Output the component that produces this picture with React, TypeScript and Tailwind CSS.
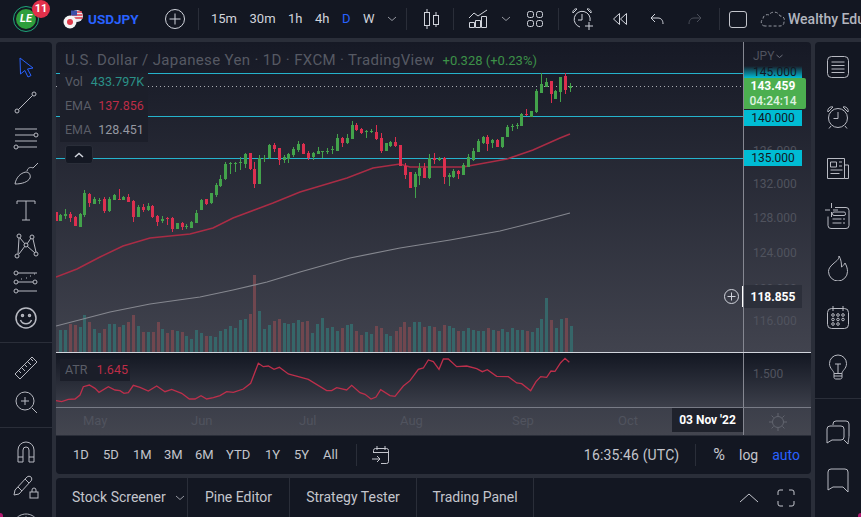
import React from "react";

type Row = number[];

// candles read off the chart: [x, high, bodyTop, bodyBottom, low, up]
const fromZoom = (ox: number, oy: number, rows: Row[]) =>
  rows.map(([vx, h, t, b, l, up]) => ({
    x: Math.round(ox + vx / 3),
    h: oy + h / 3,
    t: oy + t / 3,
    b: oy + b / 3,
    l: oy + l / 3,
    up: up === 1,
  }));

const candles = [
  ...fromZoom(50, 110, [
    [19, 305, 305, 332, 332, 0], [31, 312, 315, 333, 334, 1], [46, 298, 312, 318, 328, 1], [61, 306, 312, 325, 335, 0],
    [76, 318, 320, 348, 349, 0], [91, 308, 311, 350, 352, 1], [103, 240, 250, 315, 320, 1], [118, 250, 251, 280, 290, 0],
    [133, 262, 268, 281, 282, 1], [148, 264, 269, 272, 283, 1], [163, 262, 266, 302, 308, 0], [178, 262, 266, 302, 306, 1],
    [193, 252, 256, 270, 270, 1], [206, 236, 266, 270, 270, 0], [220, 258, 260, 270, 271, 1], [235, 252, 262, 275, 276, 0],
    [250, 270, 272, 320, 335, 0], [265, 284, 290, 320, 322, 1], [280, 283, 291, 300, 305, 0], [295, 280, 287, 300, 303, 1],
    [307, 284, 287, 322, 325, 0], [322, 316, 318, 335, 348, 0], [337, 317, 327, 334, 338, 1], [352, 322, 325, 327, 345, 0],
    [367, 322, 325, 358, 365, 0], [382, 338, 340, 356, 357, 1], [397, 337, 340, 350, 360, 0], [409, 342, 348, 350, 358, 1],
    [424, 332, 335, 353, 354, 1], [439, 300, 308, 338, 340, 1],
  ]),
  ...fromZoom(200, 110, [
    [4, 268, 270, 300, 300, 1], [19, 267, 268, 282, 285, 0], [34, 250, 250, 280, 282, 1], [49, 220, 224, 255, 262, 1],
    [61, 195, 207, 228, 230, 1], [76, 157, 163, 208, 210, 1], [91, 156, 158, 161, 192, 1], [106, 157, 159, 161, 185, 1],
    [121, 142, 157, 160, 180, 1], [136, 130, 132, 162, 175, 1], [151, 130, 130, 178, 180, 0], [163, 155, 177, 222, 235, 0],
    [178, 135, 145, 222, 222, 1], [193, 135, 145, 148, 155, 1], [208, 102, 104, 145, 146, 1], [223, 100, 104, 117, 125, 0],
    [238, 114, 114, 150, 165, 0], [253, 135, 140, 150, 160, 1], [265, 130, 132, 148, 158, 1], [280, 110, 116, 135, 140, 1],
    [295, 93, 103, 120, 126, 1], [310, 100, 102, 132, 133, 0], [325, 122, 128, 143, 150, 0], [340, 125, 128, 142, 150, 1],
    [355, 112, 123, 132, 133, 1], [367, 122, 122, 124, 145, 1], [382, 115, 122, 126, 132, 1], [397, 107, 117, 121, 133, 1],
    [412, 73, 83, 123, 124, 1], [427, 82, 83, 100, 110, 0], [442, 72, 83, 100, 103, 1], [457, 33, 44, 87, 88, 1],
    [469, 40, 44, 60, 62, 0], [484, 55, 57, 70, 72, 0], [499, 60, 62, 64, 85, 1], [514, 57, 62, 65, 70, 1],
    [529, 45, 65, 88, 90, 0], [544, 70, 83, 122, 130, 0], [559, 98, 100, 122, 124, 1], [571, 92, 95, 107, 110, 1],
    [586, 82, 95, 108, 110, 0],
  ]),
  ...fromZoom(390, 60, [
    [31, 255, 255, 318, 318, 0], [46, 310, 318, 345, 358, 0], [61, 337, 337, 384, 384, 0], [76, 335, 343, 382, 413, 1],
    [88, 308, 323, 347, 375, 1], [103, 310, 323, 353, 355, 0], [118, 283, 295, 355, 357, 1], [133, 280, 293, 300, 312, 0],
    [148, 290, 293, 300, 303, 1], [163, 290, 295, 350, 372, 0], [178, 338, 345, 350, 378, 1], [190, 327, 332, 350, 353, 1],
    [205, 330, 333, 343, 358, 0], [220, 308, 315, 345, 346, 1], [235, 283, 292, 320, 322, 1], [250, 265, 273, 300, 303, 1],
    [265, 238, 243, 275, 277, 1], [280, 228, 232, 250, 252, 1], [292, 225, 232, 252, 272, 0], [307, 236, 240, 250, 264, 1],
    [322, 238, 240, 260, 262, 0], [337, 230, 232, 260, 264, 1], [352, 194, 200, 230, 232, 1], [367, 192, 197, 202, 212, 1],
    [382, 190, 196, 199, 208, 1], [394, 160, 162, 198, 198, 1], [409, 148, 162, 165, 168, 0], [424, 152, 152, 170, 172, 1],
    [439, 88, 94, 157, 158, 1], [454, 40, 72, 98, 98, 1], [469, 55, 65, 80, 82, 1], [484, 62, 62, 102, 128, 0],
    [496, 90, 92, 118, 118, 1], [511, 50, 50, 96, 125, 1], [526, 40, 48, 90, 102, 0], [541, 70, 78, 85, 95, 1],
  ]),
];

// volume bars: [x, height, red]
const volumes: Row[] = [
  [60, 22, 0], [65, 22, 0], [70, 28, 1], [75, 27, 1], [80, 25, 0], [84, 37, 0], [89, 30, 1], [94, 23, 0], [99, 19, 0],
  [104, 23, 1], [109, 28, 0], [114, 28, 0], [119, 25, 1], [123, 27, 0], [128, 30, 1], [133, 37, 1], [138, 26, 0],
  [143, 20, 1], [148, 20, 0], [153, 20, 1], [158, 30, 1], [162, 23, 0], [167, 19, 1], [172, 22, 1], [177, 21, 0],
  [182, 20, 1], [186, 16, 0], [191, 13, 0], [196, 22, 0], [201, 19, 0], [206, 16, 1], [210, 16, 0], [215, 15, 0],
  [220, 21, 0], [225, 23, 0], [230, 26, 0], [235, 24, 0], [240, 32, 0], [245, 33, 0], [250, 38, 1], [254, 77, 1],
  [259, 41, 0], [264, 23, 0], [269, 27, 0], [274, 31, 1], [279, 33, 1], [284, 29, 0], [288, 28, 0], [293, 29, 0],
  [298, 32, 0], [302, 30, 1], [307, 31, 1], [312, 19, 0], [317, 28, 0], [322, 34, 0], [327, 24, 0], [332, 25, 0],
  [337, 21, 0], [342, 24, 1], [347, 27, 0], [351, 28, 0], [356, 21, 1], [361, 17, 1], [366, 20, 0], [371, 18, 0],
  [376, 26, 1], [381, 24, 1], [386, 18, 0], [390, 16, 0], [396, 21, 1], [400, 25, 1], [404, 30, 1], [409, 25, 1],
  [414, 30, 0], [419, 30, 0], [424, 25, 1], [429, 26, 0], [434, 25, 1], [439, 21, 0], [444, 27, 1], [449, 26, 0],
  [453, 24, 0], [458, 21, 1], [463, 21, 0], [468, 24, 0], [473, 22, 0], [478, 21, 0], [483, 21, 0], [488, 24, 1],
  [493, 22, 0], [498, 21, 1], [502, 23, 0], [507, 20, 0], [512, 24, 0], [517, 22, 0], [522, 22, 0], [527, 21, 1],
  [532, 20, 0], [537, 24, 0], [541, 33, 0], [546, 54, 0], [551, 32, 1], [556, 24, 0], [561, 33, 0], [566, 34, 1],
  [571, 26, 0],
];

const ema50 =
  "56,277 77,269 100,257 123,246 150,238 190,234 213,228 233,218 257,209 273,203 300,192 347,178 373,168 400,164 410,167 463,167 507,159 533,150 560,138 570,134";
const ema200 =
  "56,326 110,312 150,304 200,297 233,290 267,282 300,272 350,258 400,248 450,240 500,231 540,221 570,213";

const zoomPts = (ox: number, oy: number, pts: Row[]) => pts.map(([x, y]) => `${ox + x / 3},${oy + y / 3}`).join(" ");
const atr = [
  zoomPts(0, 350, [
    [168, 152], [185, 155], [205, 148], [225, 147], [240, 135], [250, 110], [268, 105], [285, 115], [297, 127], [325, 110],
    [345, 120], [360, 122], [372, 130], [385, 128], [400, 106], [420, 112], [445, 123], [470, 108], [495, 125], [515, 118],
    [545, 130], [568, 147], [585, 147], [603, 137], [620, 147], [640, 143], [660, 137], [680, 125], [700, 127], [730, 117],
    [752, 100], [775, 40], [790, 50], [805, 48], [822, 58], [838, 52], [865, 72],
  ]),
  zoomPts(290, 290, [
    [0, 253], [55, 268], [110, 302], [125, 302], [140, 293], [170, 300], [185, 286], [210, 308], [225, 313], [243, 327],
    [258, 321], [272, 299], [300, 317], [315, 319], [340, 288], [360, 272], [385, 238], [400, 234], [415, 210], [430, 215],
    [447, 238], [460, 207], [475, 207], [500, 230], [530, 228], [560, 236], [577, 245], [592, 239], [620, 259], [655, 260],
    [680, 279], [695, 281], [722, 302], [738, 275], [752, 260], [770, 262], [783, 243], [795, 244], [812, 218], [825, 205],
    [838, 217],
  ]),
].join(" ");

const Ico = ({ children, className = "" }: { children: React.ReactNode; className?: string }) => (
  <svg width="28" height="28" viewBox="0 0 28 28" fill="none" stroke="currentColor" strokeWidth="1" className={className}>
    {children}
  </svg>
);

const Slot = ({ children, className = "h-9" }: { children: React.ReactNode; className?: string }) => (
  <div className={`flex items-center justify-center ${className}`}>{children}</div>
);

const Divider = ({ className = "" }: { className?: string }) => <div className={`w-px h-[22px] bg-[#2a2e39] ${className}`} />;

const leftA = [
  <path key="a" d="M8 6l13 10-5.500 1 3.500 6.500-3 1.500-3.200-6.500-4.300 3.500z" />,
  <g key="b"><circle cx="5" cy="23" r="2" /><circle cx="22" cy="6" r="2" /><path d="M6.500 21.500L20.500 7.500" /></g>,
  <g key="c"><path d="M3 5h22M3 11h19M3 17h22M6 23h19" /><circle cx="24" cy="11" r="2" /><circle cx="4" cy="23" r="2" /></g>,
  <g key="d"><path d="M3 24c1-6 5-11 11-12 3 0 5 3 4 6-2 4-8 6-15 6z" /><path d="M15 11c1-4 4-4 6-3l5-5" /></g>,
  <path key="e" d="M5 8V5h18v3M14 5v19M10 24h8" />,
  <g key="f"><circle cx="5" cy="24" r="2" /><circle cx="7" cy="4" r="2" /><circle cx="14" cy="13" r="2" /><circle cx="20" cy="5" r="2" /><circle cx="24" cy="22" r="2" /><path d="M6 22L7 6M8 6l5 6M15 12l4-6M21 7l3 13M7 22l6-8M15 14l8 7" /></g>,
  <g key="g"><path d="M6 5h19M6 14h15M6 23h19" /><circle cx="4" cy="5" r="2" /><circle cx="4" cy="14" r="2" /><circle cx="4" cy="23" r="2" /><circle cx="23" cy="14" r="2" /><path d="M9 11h2M14 10h2M18 8h2M22 6h1" strokeDasharray="1 1" /></g>,
  <g key="h" strokeWidth="1.500"><circle cx="14" cy="14" r="10" /><circle cx="10.500" cy="11.500" r="1" /><circle cx="17.500" cy="11.500" r="1" /><path d="M8.500 16c2 5 9 5 11 0" /></g>,
];

const rightIcons = [
  <g key="a"><rect x="3.500" y="3.500" width="21" height="21" rx="4" /><path d="M7.500 9h13M7.500 12.500h13M7.500 16h13M7.500 19.500h13" /></g>,
  <g key="b"><circle cx="14" cy="15" r="9.500" /><path d="M14 9v6.500H9.500" /><path d="M4 9c-1-3 2-6 5-5M24 9c1-3-2-6-5-5M4 9l5-5M24 9l-5-5M7 23l-2 2.500M21 23l2 2.500" /></g>,
  <g key="c"><path d="M20.500 25.500h-17v-20h17zM20.500 12h4v13.500h-4" /><path d="M6.500 9h6v5h-6zM15 9h3M15 13h3M6.500 17h12M6.500 20.500h9" /></g>,
  <g key="d"><path d="M1 7h5M9 7h5M7.500 0v5M7.500 9v5" /><path d="M11 4.500h11a3 3 0 0 1 3 3v15a3 3 0 0 1-3 3H7a3 3 0 0 1-3-3v-9" /><rect x="8.500" y="9" width="13" height="3.500" rx="1.500" /><path d="M8.500 16h9M19 16h2M8.500 20h9M19 20h2" /></g>,
  <path key="e" d="M15 3c0 4-3 5-6 8-3 2.500-4.500 5-4.500 7.500a9.500 9.500 0 0 0 19 0c0-3-1-6-2.500-8.500-1 2-2 3-3.500 4 0-4-.5-8-2.500-11z" />,
  <g key="f"><rect x="3.500" y="5.500" width="21" height="20" rx="4" /><path d="M9 3v5M19 3v5" /><circle cx="9" cy="12" r="1.300" /><circle cx="14" cy="12" r="1.300" /><circle cx="19" cy="12" r="1.300" /><circle cx="9" cy="16.500" r="1.300" /><circle cx="14" cy="16.500" r="1.300" /><circle cx="19" cy="16.500" r="1.300" /><circle cx="9" cy="21" r="1.300" /><circle cx="14" cy="21" r="1.300" /></g>,
  <g key="g"><path d="M10 20.500c0-3-4.500-4.500-4.500-10a8.500 8.500 0 0 1 17 0c0 5.500-4.500 7-4.500 10z" /><path d="M10 20.500v4c0 1 1 1.500 2 1.500h4c1 0 2-.5 2-1.500v-4M10 23h8M11 11h6M14 11v9" /></g>,
];

const Candles = () => (
  <g shapeRendering="crispEdges">
    {candles.map((c, i) => {
      const fill = c.up ? "#43a24b" : "#dc2f4f";
      return (
        <g key={i} fill={fill}>
          <rect x={c.x} y={c.h} width="1" height={c.l - c.h} />
          <rect x={c.x - 1} y={c.t} width="3" height={Math.max(c.b - c.t, 1)} />
        </g>
      );
    })}
  </g>
);

// [label, top on the page, visible height] - two of them are mostly hidden by a tag
const priceLabels: [string, number, number][] = [
  ["126.000", 143, 7],
  ["132.000", 176, 16],
  ["128.000", 210, 16],
  ["124.000", 245, 16],
  ["120.000", 281, 4],
  ["116.000", 313, 16],
];

const PriceTag = ({ y, children }: { y: number; children: string }) => (
  <div
    className="absolute left-0 w-[58px] h-[16px] bg-[#00bcd4] text-[#131722] text-[12px] leading-[16px] text-center"
    style={{ top: y }}
  >
    {children}
  </div>
);

const months: [string, number][] = [
  ["May", 83],
  ["Jun", 191],
  ["Jul", 299],
  ["Aug", 400],
  ["Sep", 512],
  ["Oct", 618],
];

const ranges: [string, string][] = [
  ["1D", "w-[30px]"],
  ["5D", "w-[30px]"],
  ["1M", "w-[31px]"],
  ["3M", "w-[31px]"],
  ["6M", "w-[31px]"],
  ["YTD", "w-[39px]"],
  ["1Y", "w-[29px]"],
  ["5Y", "w-[29px]"],
  ["All", "w-[25px]"],
];

export default function App() {
  return (
    <div className="relative w-[861px] h-[517px] overflow-hidden bg-[#2a2e39] flex flex-col gap-[4px] text-[#d1d4dc] text-[14px] font-['Roboto',sans-serif]">
      {/* top bar */}
      <header className="h-[38px] shrink-0 bg-[#131722] flex items-center [&>*]:shrink-0">
        <div className="w-[198px] flex items-center pl-[13px]">
          <div className="relative w-[26px] h-[26px] rounded-full border border-[#1fa57a] p-[2px]">
            <div className="w-full h-full rounded-full bg-[#2e9e3c] flex items-center justify-center text-white text-[11px] font-bold italic">
              LE
            </div>
            <div className="absolute -top-[7px] left-[18px] w-[18px] h-[18px] rounded-full bg-[#e2304a] flex items-center justify-center text-white text-[11px] font-bold">
              11
            </div>
          </div>
          <svg width="20" height="20" viewBox="0 0 20 20" className="ml-[24px]">
            <circle cx="14" cy="7" r="6" fill="#e8e8ee" />
            <path d="M9 3h10M8.500 6h11M8.500 9h11" stroke="#e0394a" strokeWidth="1.400" />
            <path d="M8 1.500h6v5H8z" fill="#3c4fa8" />
            <circle cx="7" cy="13" r="6.500" fill="#f4f4f4" />
            <circle cx="7" cy="13" r="3" fill="#e0394a" />
          </svg>
          <span className="ml-[5px] text-[#2962ff] font-bold text-[13.5px]">USDJPY</span>
          <svg width="20" height="20" viewBox="0 0 20 20" fill="none" stroke="#d1d4dc" className="ml-[26px]">
            <circle cx="10" cy="10" r="9.500" />
            <path d="M10 4.500v11M4.500 10h11" />
          </svg>
        </div>
        <Divider />
        <div className="w-[207px] flex items-center pl-[12px] gap-[12.5px] text-[13px]">
          <span>15m</span>
          <span>30m</span>
          <span>1h</span>
          <span>4h</span>
          <span className="text-[#2962ff]">D</span>
          <span>W</span>
          <svg width="10" height="6" viewBox="0 0 10 6" fill="none" stroke="#9598a1">
            <path d="M1 1l4 3.500L9 1" />
          </svg>
        </div>
        <Divider />
        <svg width="19" height="20" viewBox="0 0 19 20" fill="none" stroke="#d1d4dc" className="ml-[16px]">
          <path d="M4 0v3M4 17v3M13 3v3M13 16v2" />
          <rect x="1.500" y="3.500" width="5" height="13" />
          <rect x="10.500" y="6.500" width="5" height="9" />
        </svg>
        <Divider className="ml-[11px]" />
        <svg width="20" height="20" viewBox="0 0 20 20" fill="none" stroke="#d1d4dc" className="ml-[14px]">
          <path d="M1.500 18.500v-5h5v5zM7.500 18.500v-7h5v7zM13.500 18.500v-11h5v11z" />
          <path d="M1 9l5-5 4 3 9-6" />
        </svg>
        <svg width="10" height="6" viewBox="0 0 10 6" fill="none" stroke="#9598a1" className="ml-[13px]">
          <path d="M1 1l4 3.500L9 1" />
        </svg>
        <svg width="18" height="18" viewBox="0 0 18 18" fill="none" stroke="#d1d4dc" className="ml-[15px]">
          <rect x="1.500" y="1.500" width="6" height="6" rx="2" />
          <rect x="10.500" y="1.500" width="6" height="6" rx="2" />
          <rect x="1.500" y="10.500" width="6" height="6" rx="2" />
          <rect x="10.500" y="10.500" width="6" height="6" rx="2" />
        </svg>
        <Divider className="ml-[14px]" />
        <svg width="22" height="22" viewBox="0 0 22 22" fill="none" stroke="#d1d4dc" className="ml-[13px]">
          <path d="M8 19a8 8 0 1 1 10-6" />
          <path d="M10 6v6H6" />
          <path d="M1 5c-1-2 2-5 4-4M19 5c1-2-2-5-4-4M1 5l4-4M19 5l-4-4" />
          <path d="M17 14v8M13 18h8" />
        </svg>
        <svg width="16" height="14" viewBox="0 0 16 14" fill="none" stroke="#d1d4dc" className="ml-[18px]">
          <path d="M7.500 1.500L1.500 7l6 5.500zM14.500 1.500L8.500 7l6 5.500z" />
        </svg>
        <svg width="14" height="12" viewBox="0 0 14 12" fill="none" stroke="#d1d4dc" className="ml-[22px]">
          <path d="M5 1L1 5l4 4M1 5h7c3 0 5 2 5 6" />
        </svg>
        <svg width="14" height="12" viewBox="0 0 14 12" fill="none" stroke="#4a4e59" className="ml-[24px]">
          <path d="M9 1l4 4-4 4M13 5H6c-3 0-5 2-5 6" />
        </svg>
        <Divider className="ml-[17px]" />
        <div className="ml-[9px] w-[18px] h-[17px] rounded-[3px] border border-[#c3c5cc]" />
        <svg width="25" height="18" viewBox="0 0 25 18" fill="none" stroke="#9598a1" strokeDasharray="3 2" className="ml-[13px]">
          <path d="M5 16C1 16 0 11 3 9c0-4 4-5 6-4 2-4 9-4 11 1 4 0 5 3 4 6 0 3-2 4-4 4z" />
        </svg>
        <span className="ml-[3px] whitespace-nowrap text-[#b2b5be] font-medium">Wealthy Edu</span>
      </header>

      <div className="flex-1 min-h-0 flex gap-[4px]">
        {/* drawing tools */}
        <aside className="w-[52px] shrink-0 bg-[#131722] rounded-tr-[4px] text-[#b8bac2] flex flex-col">
          <div className="pt-[6px] pb-[6px] border-b border-[#2a2e39]">
            {leftA.map((p, i) => (
              <Slot key={i}>
                <Ico className={i === 0 ? "text-[#2962ff]" : ""}>{p}</Ico>
              </Slot>
            ))}
          </div>
          <div className="pt-[8px] pb-[8px] border-b border-[#2a2e39]">
            <Slot className="h-[34px]">
              <Ico>
                <path d="M3 20L20 3l5 5L8 25z" />
                <path d="M7 17l2 2M10 14l3 3M13 11l2 2M16 8l3 3M19 5l2 2" />
              </Ico>
            </Slot>
            <Slot className="h-[34px]">
              <Ico>
                <circle cx="13" cy="13" r="9" />
                <path d="M20 20l5 5M13 9v8M9 13h8" />
              </Ico>
            </Slot>
          </div>
          <div className="pt-[7px]">
            <Slot className="h-[34px]">
              <Ico>
                <path d="M6 24V12a8 8 0 0 1 16 0v12h-5V12a3 3 0 0 0-6 0v12zM6 19h5M17 19h5" />
              </Ico>
            </Slot>
            <Slot className="h-[34px]">
              <Ico>
                <path d="M3 18L15 5c1-1 3-1 4 0s1 3 0 4L7 22l-5 1zM6 15l4 4M13 7l4 4" />
                <rect x="18" y="20" width="8" height="6" />
                <path d="M20 20v-2a2 2 0 0 1 4 0v2" />
              </Ico>
            </Slot>
            <Slot className="h-[34px]">
              <Ico>
                <path d="M3 14c5-8 17-8 22 0-5 8-17 8-22 0z" />
                <circle cx="14" cy="14" r="3" />
              </Ico>
            </Slot>
          </div>
        </aside>

        <main className="w-[755px] shrink-0 flex flex-col gap-[1px] min-h-0">
          {/* chart */}
          <section className="h-[393px] shrink-0 rounded-t-[4px] overflow-hidden flex flex-col text-[#50535e] text-[12px]">
            <div className="h-[311px] shrink-0 flex bg-linear-to-b from-[#161925] to-[#41434e] border-b border-[#d1d4dc]">
              <div className="relative w-[687px] shrink-0">
                <svg width="687" height="310" viewBox="56 42 687 310" fill="none" className="absolute left-0 top-0">
                  {volumes.map(([x, h, r], i) => (
                    <rect key={i} x={x - 1} y={352 - h} width="3" height={h} fill={r ? "#70474f" : "#366669"} shapeRendering="crispEdges" />
                  ))}
                  <path d="M56 73.500h687M56 116.500h687M56 158.500h687" stroke="#25b3cc" />
                  <path d="M56 86.500h687" stroke="#a7a9b0" strokeDasharray="1 3" />
                  <polyline points={ema200} stroke="#85878f" strokeWidth="1.200" />
                  <polyline points={ema50} stroke="#a92c45" strokeWidth="1.500" />
                  <Candles />
                  <circle cx="731.500" cy="296.500" r="7" stroke="#d1d4dc" />
                  <path d="M731.500 292.500v8M727.500 296.500h8" stroke="#d1d4dc" />
                  <path d="M742.500 286v21" stroke="#ffffff" />
                </svg>

                <div className="absolute left-[9px] top-[7px] flex items-center text-[15px] whitespace-nowrap">
                  <span className="text-[#565963] tracking-[0.35px]">U.S. Dollar / Japanese Yen · 1D · FXCM · TradingView</span>
                  <span className="ml-[8px] text-[13px] text-[#3d9148]">+0.328 (+0.23%)</span>
                </div>

                <div className="absolute left-[4px] top-[31px] w-[88px] h-[69px] bg-[#1c1f2a] text-[#5a5d67] text-[12.5px] flex flex-col px-[5px] gap-[5px]">
                  <div className="flex gap-[8px] h-[19px] items-center">
                    <span>Vol</span>
                    <span className="text-[#2b9188]">433.797K</span>
                  </div>
                  <div className="flex gap-[7px] h-[19px] items-center">
                    <span>EMA</span>
                    <span className="text-[#bd2d47]">137.856</span>
                  </div>
                  <div className="flex gap-[7px] h-[19px] items-center">
                    <span>EMA</span>
                    <span className="text-[#9598a1]">128.451</span>
                  </div>
                </div>
                <div className="absolute left-[9px] top-[103px] w-[28px] h-[19px] bg-[#141823] border border-[#2a2e39] rounded-[3px] flex items-center justify-center">
                  <svg width="10" height="6" viewBox="0 0 10 6" fill="none" stroke="#d1d4dc" strokeWidth="1.500">
                    <path d="M1 5l4-3.500L9 5" />
                  </svg>
                </div>
              </div>

              <div className="relative flex-1 border-l border-[#858791]">
                <div className="absolute left-[9px] top-[5px] flex items-center gap-[2px]">
                  JPY
                  <svg width="7" height="5" viewBox="0 0 7 5" fill="none" stroke="#6a6d78">
                    <path d="M.5 1l3 2.500 3-2.500" />
                  </svg>
                </div>
                {priceLabels.map(([t, y, h]) => (
                  <div key={t} className="absolute left-[9px] leading-[16px] overflow-hidden" style={{ top: y - 42, height: h }}>
                    {t}
                  </div>
                ))}
                <div className="absolute left-0 top-[24px] w-[58px] h-[12px] bg-linear-to-b from-transparent to-[#00bcd4]" />
                <div className="absolute left-[9px] top-[22px] leading-[16px] text-[#131722] h-[12px] overflow-hidden">145.000</div>
                <PriceTag y={68}>140.000</PriceTag>
                <PriceTag y={108}>135.000</PriceTag>
                <div className="absolute left-0 top-[36px] w-[62px] h-[31px] bg-[#4caf50] rounded-r-[2px] flex flex-col items-center justify-center leading-[15px] font-bold text-white pr-[4px]">
                  <span>143.459</span>
                  <span className="font-medium text-[#dff3e0]">04:24:14</span>
                </div>
                <div className="absolute left-0 top-[243px] w-[58px] h-[23px] bg-[#2c2f3a] flex items-center justify-center text-white font-bold">
                  118.855
                </div>
              </div>
            </div>

            <div className="h-[55px] shrink-0 flex bg-linear-to-b from-[#131722] to-[#3c3f4a] border-b border-[#787b86]">
              <div className="relative w-[687px] shrink-0">
                <svg width="687" height="54" viewBox="56 353 687 54" fill="none" className="absolute left-0 top-0">
                  <polyline points={atr} stroke="#bd2f4b" strokeWidth="1.300" />
                </svg>
                <div className="absolute left-[4px] top-[6px] w-[70px] h-[22px] bg-[#1b1e29] flex items-center px-[5px] gap-[9px] text-[12.5px]">
                  <span className="text-[#5a5d67]">ATR</span>
                  <span className="text-[#bd2d47]">1.645</span>
                </div>
              </div>
              <div className="relative flex-1 border-l border-[#858791]">
                <div className="absolute left-[9px] top-[13px] leading-[16px]">1.500</div>
              </div>
            </div>

            <div className="flex-1 flex bg-linear-to-b from-[#3c3f4a] to-[#43454f]">
              <div className="relative w-[687px] shrink-0 text-[13px]">
                {months.map(([m, x]) => (
                  <span key={m} className="absolute top-[5px] leading-[16px]" style={{ left: x - 56 }}>
                    {m}
                  </span>
                ))}
                <div className="absolute right-0 top-0 w-[71px] h-[24px] bg-[#1f222c] text-white font-bold text-[12px] flex items-center justify-center">
                  03 Nov '22
                </div>
              </div>
              <div className="flex-1 border-l border-[#858791] flex items-center justify-center text-[#62656f]">
                <svg width="18" height="18" viewBox="0 0 18 18" fill="none" stroke="currentColor">
                  <circle cx="9" cy="9" r="5.500" />
                  <path d="M9 0v3M9 15v3M0 9h3M15 9h3M2.600 2.600l2 2M13.400 13.400l2 2M2.600 15.400l2-2M13.400 4.600l2-2" />
                </svg>
              </div>
            </div>
          </section>

          {/* range bar */}
          <div className="h-[38px] shrink-0 bg-[#131722] rounded-b-[4px] flex items-center text-[#c3c5cc]">
            <div className="w-[300px] shrink-0 flex items-center pl-[17px] text-[13px]">
              {ranges.map(([r, w]) => (
                <span key={r} className={w}>
                  {r}
                </span>
              ))}
            </div>
            <Divider />
            <svg width="18" height="18" viewBox="0 0 18 18" fill="none" stroke="currentColor" className="ml-[15px]">
              <path d="M1.500 7V4.500a2 2 0 0 1 2-2h11a2 2 0 0 1 2 2v11a2 2 0 0 1-2 2H9M1 6.500h16M5 0v4M13 0v4M0 13h7M5 10l3 3-3 3" />
            </svg>
            <span className="ml-auto whitespace-nowrap tracking-[0.15px]">16:35:46 (UTC)</span>
            <Divider className="ml-[16px]" />
            <span className="ml-[17px] text-[16px]">%</span>
            <span className="ml-[14px]">log</span>
            <span className="ml-[14px] mr-[11px] text-[#2962ff]">auto</span>
          </div>

          {/* bottom tabs */}
          <div className="h-[39px] shrink-0 mt-[3px] bg-[#131722] rounded-t-[4px] flex items-stretch text-[#c3c5cc]">
            <div className="w-[132px] shrink-0 flex items-center pl-[16px] border-r border-[#2a2e39]">
              Stock Screener
              <svg width="10" height="6" viewBox="0 0 10 6" fill="none" stroke="#9598a1" className="ml-[9px]">
                <path d="M1 1l4 3.500L9 1" />
              </svg>
            </div>
            <div className="w-[102px] shrink-0 flex items-center justify-center border-r border-[#2a2e39]">Pine Editor</div>
            <div className="w-[127px] shrink-0 flex items-center justify-center border-r border-[#2a2e39]">Strategy Tester</div>
            <div className="w-[117px] shrink-0 flex items-center justify-center border-r border-[#2a2e39]">Trading Panel</div>
            <div className="flex-1 flex items-center justify-end pr-[16px] gap-[18px]">
              <svg width="20" height="10" viewBox="0 0 20 10" fill="none" stroke="#c3c5cc">
                <path d="M1 9l9-8 9 8" />
              </svg>
              <svg width="18" height="18" viewBox="0 0 18 18" fill="none" stroke="#c3c5cc">
                <path d="M1 6V3a2 2 0 0 1 2-2h3M12 1h3a2 2 0 0 1 2 2v3M17 12v3a2 2 0 0 1-2 2h-3M6 17H3a2 2 0 0 1-2-2v-3" />
              </svg>
            </div>
          </div>
        </main>

        {/* right widgets */}
        <aside className="flex-1 bg-[#131722] rounded-tl-[4px] text-[#b8bac2] flex flex-col">
          <div className="pb-[6px] border-b border-[#2a2e39]">
            {rightIcons.map((p, i) => (
              <Slot key={i} className="h-[50px]">
                <Ico>{p}</Ico>
              </Slot>
            ))}
          </div>
          <div className="pt-[9px]">
            <Slot className="h-[48px]">
              <Ico>
                <path d="M9 7V6a3 3 0 0 1 3-3h10a3 3 0 0 1 3 3v12c0 1-.500 3-1 8l-4-4" />
                <path d="M3 11a3 3 0 0 1 3-3h11a3 3 0 0 1 3 3v8a3 3 0 0 1-3 3H8l-5 3z" />
              </Ico>
            </Slot>
            <Slot className="h-[48px]">
              <Ico>
                <path d="M4 6a3 3 0 0 1 3-3h14a3 3 0 0 1 3 3v20l-5-5H9l-5 3z" />
              </Ico>
            </Slot>
          </div>
        </aside>
      </div>

      {/* bits of the wallpaper showing at the window corners */}
      <div className="absolute left-0 bottom-0 w-[3px] h-[4px] rounded-tr-[3px] bg-[#b0186e]" />
      <div className="absolute right-0 bottom-0 w-[3px] h-[4px] rounded-tl-[3px] bg-[#b0186e]" />
    </div>
  );
}
